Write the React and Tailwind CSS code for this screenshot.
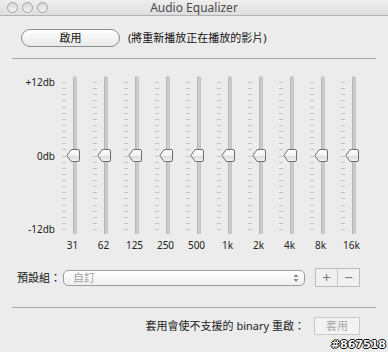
import React from 'react';

const bands = ['31', '62', '125', '250', '500', '1k', '2k', '4k', '8k', '16k'];
const ticks = Array.from({ length: 25 }, (_, i) => i);

const Thumb = () => (
  <svg width="14" height="13" viewBox="0 0 14 13" className="absolute left-[9px] top-[73px]">
    <defs>
      <linearGradient id="thumbFill" x1="0" y1="0" x2="0" y2="1">
        <stop offset="0" stopColor="#ffffff" />
        <stop offset="0.5" stopColor="#f2f2f2" />
        <stop offset="0.55" stopColor="#dcdcdc" />
        <stop offset="1" stopColor="#f4f4f4" />
      </linearGradient>
    </defs>
    <path
      d="M0.8 6.5 L5.2 0.5 H12 Q13.5 0.5 13.5 2 V11 Q13.5 12.5 12 12.5 H5.2 Z"
      fill="url(#thumbFill)"
      stroke="#6f6f6f"
      strokeWidth="1"
    />
  </svg>
);

const Slider = ({ label }) => (
  <div className="flex w-[31px] flex-col">
    <div className="relative flex h-[160px]">
      <div className="ml-[5px] mt-[6px] flex h-[148px] w-[4px] flex-col justify-between">
        {ticks.map(t => (
          <div key={t} className="h-px w-full bg-[#c4c4c4]" />
        ))}
      </div>
      <div className="ml-[7px] h-[158px] w-[4px] rounded-t-full bg-gradient-to-r from-[#afafaf] via-[#d2d2d2] to-[#c0c0c0]" />
      <Thumb />
    </div>
    <div className="mt-[3px] text-center text-[10px] leading-[13px] text-[#222]">{label}</div>
  </div>
);

const App = () => {
  return (
    <div
      className="relative h-[352px] w-[388px] overflow-hidden bg-[#ececec] text-[#1e1e1e]"
      style={{ fontFamily: '"Noto Sans", "Noto Sans CJK TC", sans-serif' }}
    >
      {/* Title bar */}
      <div className="relative flex h-[16px] items-center border-b border-[#b3b3b3] bg-gradient-to-b from-[#eeeeee] to-[#dedede]">
        <div className="ml-[7px] flex gap-[4px]">
          {[0, 1, 2].map(i => (
            <div
              key={i}
              className="h-[11px] w-[11px] rounded-full border border-[#a2a2a2] bg-gradient-to-b from-[#d6d6d6] to-[#f4f4f4]"
            />
          ))}
        </div>
        <div className="absolute inset-x-0 top-0 text-center text-[12px] leading-[16px] text-[#4a4a4a]">
          Audio Equalizer
        </div>
      </div>

      {/* Enable row */}
      <div className="mt-[13px] flex items-center">
        <button className="ml-[21px] h-[18px] w-[99px] rounded-full border border-[#8d8d8d] bg-gradient-to-b from-[#ffffff] to-[#e9e9e9] text-[11px] leading-[16px] text-[#111]">
          啟用
        </button>
        <span className="ml-[8px] text-[11px] leading-[16px] text-[#111]">(將重新播放正在播放的影片)</span>
      </div>

      <div className="mx-[12px] mt-[11px] h-px bg-[#a9a9a9]" />

      {/* Sliders */}
      <div className="mt-[17px] flex">
        <div className="flex h-[160px] w-[57px] flex-col justify-between pr-[2px] text-right text-[10px] leading-[13px] text-[#222]">
          <div>+12db</div>
          <div>0db</div>
          <div>-12db</div>
        </div>
        {bands.map(b => (
          <Slider key={b} label={b} />
        ))}
      </div>

      {/* Presets */}
      <div className="mt-[16px] flex items-center">
        <span className="ml-[17px] w-[46px] text-[11px] leading-[16px] text-[#111]">預設組：</span>
        <div className="flex h-[16px] w-[242px] items-center justify-between rounded-[5px] border border-[#9c9c9c] bg-gradient-to-b from-[#ffffff] to-[#efefef] pl-[9px] pr-[5px]">
          <span className="text-[11px] leading-[14px] text-[#a3a3a3]">自訂</span>
          <svg width="6" height="10" viewBox="0 0 6 10">
            <path d="M3 1 L5.5 4 H0.5 Z" fill="#8a8a8a" />
            <path d="M3 9 L5.5 6 H0.5 Z" fill="#8a8a8a" />
          </svg>
        </div>
        <div className="ml-[10px] flex h-[19px] w-[45px] border border-[#bdbdbd] bg-[#f0f0f0]">
          <div className="flex w-[22px] items-center justify-center border-r border-[#c8c8c8] text-[15px] leading-none text-[#7c7c7c]">+</div>
          <div className="flex flex-1 items-center justify-center text-[15px] leading-none text-[#7c7c7c]">−</div>
        </div>
      </div>

      <div className="mx-[12px] mt-[20px] h-px bg-[#a9a9a9]" />

      {/* Apply row */}
      <div className="mt-[9px] flex items-center justify-end pr-[28px]">
        <span className="text-[11px] leading-[16px] text-[#222]">套用會使不支援的 binary 重啟：</span>
        <button className="ml-[9px] h-[18px] w-[46px] border border-[#c9c9c9] bg-[#f3f3f3] text-[11px] leading-[16px] text-[#a8a8a8]">
          套用
        </button>
      </div>

      {/* Watermark */}
      <div
        className="absolute bottom-[1px] right-[2px] text-[11px] font-bold leading-[12px] text-white [text-shadow:1px_0_0_#000,-1px_0_0_#000,0_1px_0_#000,0_-1px_0_#000]"
        style={{ fontFamily: '"DejaVu Sans", sans-serif' }}
      >
        #867518
      </div>
    </div>
  );
};

export default App;
